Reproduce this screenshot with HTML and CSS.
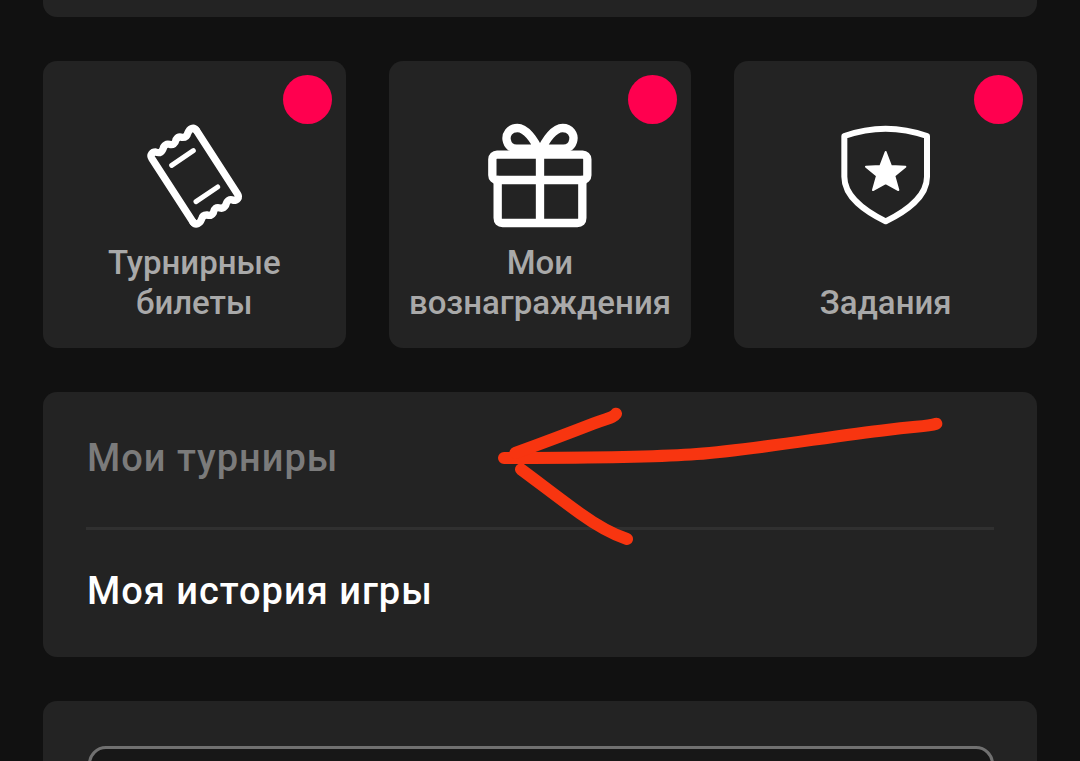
FILE: index.html
```html
<!DOCTYPE html>
<html lang="ru">
<head>
    <meta charset="utf-8">
    <meta name="viewport" content="width=device-width, initial-scale=1">
    <title>Профиль</title>
    <link rel="stylesheet" href="styles.css">
</head>
<body>
    <main class="page">
        <div class="card card-top"></div>

        <!-- Tiles -->
        <nav class="tiles">
            <a class="card tile" href="#tickets">
                <span class="badge"></span>
                <svg class="tile-icon" viewBox="0 0 390 390" aria-hidden="true">
                    <g id="ticket-half">
                        <path stroke-width="22" d="M192 336L69 146C61 134 70 126 80 126Q98 134 104 111Q111 100 121 103Q137 108 141 89Q148 78 159 82Q173 83 176 70C181 57 193 49 202 61"/>
                        <path stroke-width="15" d="M128 166L193 122"/>
                    </g>
                    <use href="#ticket-half" transform="rotate(180 197 198.5)"/>
                </svg>
                <span class="tile-label">Турнирные билеты</span>
            </a>
            <a class="card tile" href="#rewards">
                <span class="badge"></span>
                <svg class="tile-icon" viewBox="0 0 390 390" aria-hidden="true">
                    <g stroke-width="25">
                        <rect x="52" y="134" width="285" height="76" rx="14"/>
                        <path d="M68 210V324Q68 339 83 339H307Q322 339 322 324V210M195 134V339"/>
                        <path d="M195 128C178 88 152 54 127 54C103 54 92 74 95 90C98 108 112 116 125 116H190"/>
                        <path d="M195 128C212 88 238 54 263 54C287 54 298 74 295 90C292 108 278 116 265 116H200"/>
                    </g>
                </svg>
                <span class="tile-label">Мои вознаграждения</span>
            </a>
            <a class="card tile" href="#tasks">
                <span class="badge"></span>
                <svg class="tile-icon" viewBox="0 0 390 390" aria-hidden="true">
                    <path stroke-width="18" d="M70 78Q194 34 318 78V200C318 262 254 304 194 334C134 304 70 262 70 200Z"/>
                    <path class="star" stroke-width="6" d="M194 126L210 168L253 170L220 197L232 240L194 219L156 240L168 197L135 170L178 168Z"/>
                </svg>
                <span class="tile-label">Задания</span>
            </a>
        </nav>

        <!-- Menu -->
        <div class="card menu">
            <a class="menu-item muted" href="#tournaments">Мои турниры</a>
            <a class="menu-item" href="#history">Моя история игры</a>
            <svg class="arrow" viewBox="0 0 1440 510" aria-hidden="true">
                <path d="M1369 101C1340 110 1310 108 1220 120C1050 139 820 180 650 192C500 204 300 203 72 204"/>
                <path d="M408 71C398 85 385 83 340 101C250 136 180 162 106 189"/>
                <path d="M123 238C180 280 240 327 300 370C350 406 390 430 441 447"/>
            </svg>
        </div>

        <div class="card form-card">
            <input class="field" type="text" aria-label="Код">
        </div>
    </main>
</body>
</html>
```
FILE: styles.css
```css
* { box-sizing: border-box; }
body {
    margin: 0;
    height: 100vh;
    overflow: hidden;
    background-color: #111111;
    color: white;
    font-family: Roboto, "Noto Sans", sans-serif;
    font-weight: 500;
}
a { color: inherit; text-decoration: none; }
.page { display: flex; flex-direction: column; gap: 44px; padding: 0 43px; }
.card { background-color: #232323; border-radius: 14px; }
.card-top { height: 17px; border-radius: 0 0 14px 14px; }

.tiles { display: grid; grid-template-columns: repeat(3, 1fr); gap: 43px; }
.tile {
    position: relative;
    display: flex;
    flex-direction: column;
    align-items: center;
    gap: 3px;
    padding: 49px 16px 25px;
}
.tile-icon { width: 130px; height: 130px; fill: none; stroke: white; stroke-linecap: round; stroke-linejoin: round; }
.star { fill: white; }
.tile-label {
    display: flex;
    align-items: flex-end;
    min-height: 80px;
    max-width: 270px;
    color: #a9a9a9;
    font-size: 33px;
    line-height: 40px;
    text-align: center;
}
.badge {
    position: absolute;
    top: 14px;
    right: 14px;
    width: 49px;
    height: 49px;
    border-radius: 50%;
    background-color: #ff004f;
}

.menu { position: relative; padding: 0 43px; }
.menu-item {
    display: block;
    padding: 37px 1px 42px;
    font-size: 38px;
    line-height: 48px;
    letter-spacing: 1px;
}
.muted { padding: 42px 1px 45px; border-bottom: 3px solid #303030; color: #7b7b7b; }
.arrow {
    position: absolute;
    top: -2px;
    left: 437px;
    width: 480px;
    height: 170px;
    fill: none;
    stroke: #f83510;
    stroke-width: 36px;
    stroke-linecap: round;
    stroke-linejoin: round;
    pointer-events: none;
}

.form-card { padding: 45px 43px 45px 45px; }
.field {
    display: block;
    width: 100%;
    height: 120px;
    padding: 0 40px;
    border: 3px solid #707070;
    border-radius: 18px;
    background-color: #171717;
    color: white;
    font: inherit;
    font-size: 38px;
}
```
